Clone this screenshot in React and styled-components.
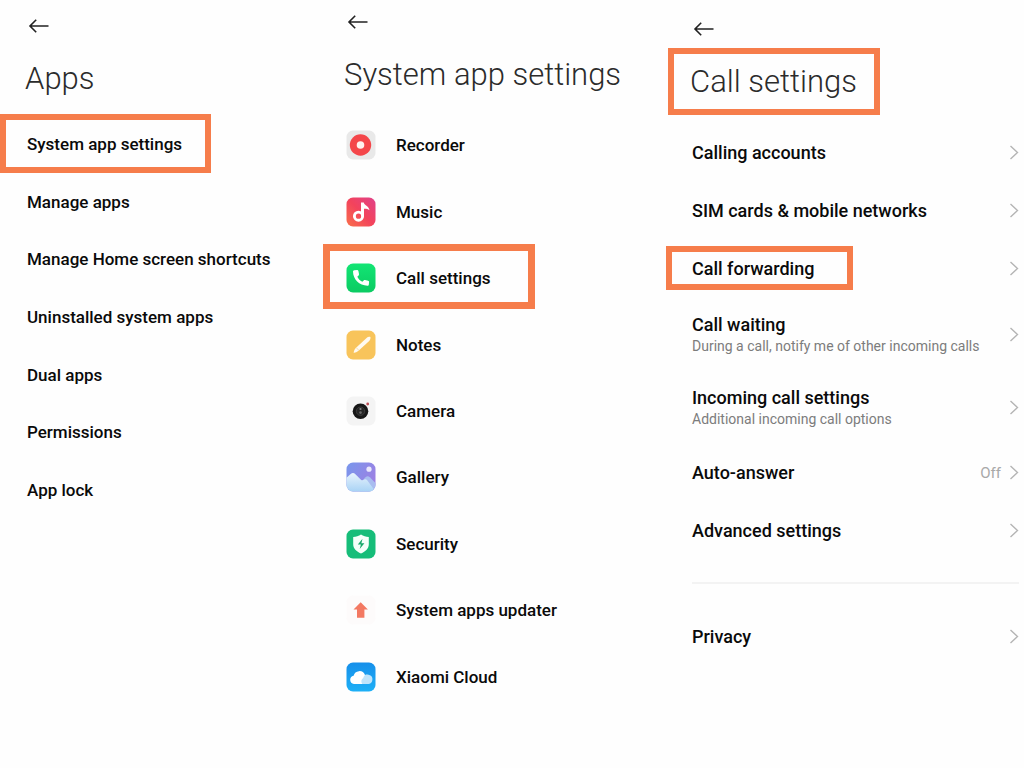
import React from "react";
import styled, { createGlobalStyle } from "styled-components";

const GlobalStyle = createGlobalStyle`
  *, *::before, *::after { box-sizing: border-box; }
  body {
    margin: 0;
    background: #fefefe;
    color: #0a0a0a;
    font-family: Roboto, "Liberation Sans", sans-serif;
  }
`;

const Page = styled.main`
  display: grid;
  grid-template-columns: 322fr 344fr 358fr;
  min-height: 100vh;
`;

const Screen = styled.section`
  display: flex;
  flex-direction: column;
  min-width: 0;
  padding: ${(p) => p.$top}px 5px 24px ${(p) => p.$left}px;
`;

const BackButton = styled.button`
  display: flex;
  align-self: flex-start;
  padding: 0;
  border: 0;
  background: none;
  color: #222;
  cursor: pointer;
`;

const Title = styled.h1`
  position: relative;
  margin: 24px 0 6px -2px;
  font-size: 31px;
  font-weight: 300;
  line-height: 44px;
  color: #2b2b2b;
  white-space: nowrap;
`;

const List = styled.ul`
  display: flex;
  flex-direction: column;
  margin: ${(p) => p.$gap || 0}px 0 0;
  padding: 0;
  list-style: none;
  min-height: ${(p) => (p.$height ? `${p.$height}px` : "auto")};
`;

const Item = styled.li`
  position: relative;
  display: flex;
  flex: 1 0 auto;
`;

const Row = styled.button`
  display: flex;
  flex: 1;
  align-items: center;
  gap: ${(p) => p.$gap || 8}px;
  min-width: 0;
  min-height: ${(p) => p.$height || 0}px;
  padding: 0;
  border: 0;
  background: none;
  color: inherit;
  font: inherit;
  text-align: left;
  cursor: pointer;
`;

const Texts = styled.span`
  display: flex;
  flex: 1;
  flex-direction: column;
  min-width: 0;
`;

const Label = styled.span`
  font-size: ${(p) => (p.$large ? 18 : 17)}px;
  font-weight: 500;
  line-height: 22px;
  white-space: nowrap;
`;

const Note = styled.span`
  font-size: 14px;
  line-height: 20px;
  color: #7c7c7c;
  white-space: nowrap;
`;

const Value = styled.span`
  font-size: 15px;
  line-height: 20px;
  color: #a8a8a8;
`;

const Divider = styled.hr`
  width: 100%;
  height: 2px;
  margin: 22px 0 24px;
  border: 0;
  background: #f3f3f3;
`;

const Highlight = styled.span`
  position: absolute;
  top: ${(p) => p.$top}px;
  left: ${(p) => p.$left}px;
  width: ${(p) => p.$width}px;
  height: ${(p) => p.$height}px;
  border: ${(p) => p.$line || 6}px solid #f67d4b;
  pointer-events: none;
`;

const Icon = styled.svg`
  display: block;
  flex: none;
`;

function Back() {
  return (
    <BackButton aria-label="Back">
      <Icon width="22" height="14" viewBox="0 0 22 14" fill="none" stroke="currentColor" strokeWidth="1.6">
        <path d="M21.500 7H3.200M9.200 .8 3 7l6.200 6.200" />
      </Icon>
    </BackButton>
  );
}

function Chevron() {
  return (
    <Icon width="10" height="16" viewBox="0 0 10 16" fill="none" stroke="#b4b4b4" strokeWidth="1.4">
      <path d="M1.500 1 8.500 7.500l-7 6.500" />
    </Icon>
  );
}

function AppIcon({ children, fill }) {
  return (
    <Icon width="30" height="30" viewBox="0 0 30 30" aria-hidden="true">
      <rect x=".5" y=".5" width="29" height="29" rx="6.500" fill={fill} />
      {children}
    </Icon>
  );
}

const icons = {
  recorder: (
    <AppIcon fill="#e9e9e9">
      <circle cx="14.500" cy="15" r="10.700" fill="#f4464a" />
      <circle cx="14.500" cy="15" r="3.800" fill="#fff1ee" />
    </AppIcon>
  ),
  music: (
    <AppIcon fill="url(#music)">
      <defs>
        <linearGradient id="music" x1="1" y1="0" x2="0" y2="1">
          <stop offset="0" stopColor="#e0428a" />
          <stop offset=".5" stopColor="#f3435c" />
          <stop offset="1" stopColor="#f9704b" />
        </linearGradient>
      </defs>
      <circle cx="12.500" cy="19.200" r="4.100" fill="none" stroke="#fff" strokeWidth="2.900" />
      <path d="M15 5.500h2.800c.3 2.700 5 3.300 5.700 7.800-1.700-1.300-3.800-1.700-5.500-1.500V19.200h-3z" fill="#fff" />
    </AppIcon>
  ),
  call: (
    <AppIcon fill="url(#call)">
      <defs>
        <linearGradient id="call" x1="0" y1="0" x2="0" y2="1">
          <stop offset="0" stopColor="#12e574" />
          <stop offset="1" stopColor="#0bcb62" />
        </linearGradient>
      </defs>
      <path
        d="M8.200 7.300l2.800-.3c.8-.1 1.200.3 1.400 1l.6 3.100c.1.600 0 1-.4 1.400l-1.300 1.300c1.100 2.300 2.700 3.900 5 5l1.400-1.300c.4-.4.8-.5 1.400-.4l3 .6c.7.200 1.100.6 1 1.400l-.3 2.600c-.1.700-.6 1.100-1.300 1.100C13.200 22.500 7.200 16.600 7 8.600c0-.7.500-1.200 1.200-1.300z"
        fill="#fff"
      />
    </AppIcon>
  ),
  notes: (
    <AppIcon fill="#f8c45b">
      <path d="M20.300 8.200c1.300-1.200 2.700-1.600 4.100-1.200.3 1.500-.1 2.800-1.200 4L12.500 20.800c-1.500 1.200-3 1.900-4.800 2.100.1-1.900.8-3.500 2.100-4.800z" fill="#fffaf0" />
      <path d="M10.300 17.700l2.500 2.600" stroke="#f4d598" strokeWidth=".8" />
    </AppIcon>
  ),
  camera: (
    <AppIcon fill="#f4f4f4">
      <circle cx="14.500" cy="15.200" r="7.800" fill="#171717" />
      <circle cx="14.500" cy="15.200" r="4.200" fill="#252525" stroke="#3b3b3b" />
      <circle cx="14.500" cy="13" r="1.100" fill="#858585" />
      <circle cx="14.500" cy="16.600" r="1.300" fill="#686868" />
      <circle cx="21.700" cy="8" r="1.400" fill="#b94b54" />
    </AppIcon>
  ),
  gallery: (
    <AppIcon fill="url(#gallery)">
      <defs>
        <linearGradient id="gallery" x1="0" y1="0" x2="1" y2=".6">
          <stop offset="0" stopColor="#7897ec" />
          <stop offset="1" stopColor="#9d80e3" />
        </linearGradient>
        <linearGradient id="hill" x1="0" y1="0" x2="0" y2="1">
          <stop offset="0" stopColor="#e8f3fd" />
          <stop offset="1" stopColor="#a9d3f5" />
        </linearGradient>
      </defs>
      <path d="M14 21l5.500-5.700c1.500-1.500 3-1.200 4.300 0l5.700 5.700v2a6.500 6.500 0 0 1-6.500 6.500H14z" fill="#a9bdf0" />
      <path d="M.5 15.800l4.200-3.800c1.500-1.300 3.200-1.300 4.700.2l5.300 5.200c1.300 1.200 2.400 1 3.600.2 1.100-.7 2-.3 2.900.6l6.600 9.100c-1.200 1.400-2.800 2.200-4.800 2.200H7A6.500 6.500 0 0 1 .5 23z" fill="url(#hill)" />
      <circle cx="23" cy="7.200" r="2.600" fill="#e9e7fc" />
    </AppIcon>
  ),
  security: (
    <AppIcon fill="#16bd79">
      <path d="M15 5.500c2.300 1.600 4.900 2.400 7.800 2.500v7.300c0 4.500-3.200 7.100-7.800 9.200-4.600-2.100-7.800-4.700-7.800-9.200V8c2.900-.1 5.500-.9 7.800-2.500z" fill="#f4fff9" />
      <path d="M16.500 9.800l-4.700 5.700h3.100l-1.200 4.600 4.700-5.900h-3z" fill="#16a96a" />
    </AppIcon>
  ),
  updater: (
    <AppIcon fill="#fdfbfb">
      <path d="M14.700 7.200l7.200 7.200h-3.500v8.300H11v-8.300H7.500z" fill="#f37962" />
    </AppIcon>
  ),
  cloud: (
    <AppIcon fill="url(#cloud)">
      <defs>
        <linearGradient id="cloud" x1="0" y1="0" x2="0" y2="1">
          <stop offset="0" stopColor="#168fea" />
          <stop offset="1" stopColor="#1eb0f6" />
        </linearGradient>
      </defs>
      <path d="M8 22a4.200 4.200 0 0 1-.4-8.300 6 6 0 0 1 11.400-.8A4.700 4.700 0 1 1 21.500 22z" fill="#fff" />
      <path d="M17.200 16a4.700 4.700 0 1 1 4.300 6h-5.300a4.600 4.600 0 0 1 1-6z" fill="#bfe4fb" />
    </AppIcon>
  ),
};

const appItems = [
  { label: "System app settings", mark: { $top: -1, $left: -27, $width: 211, $height: 59 } },
  { label: "Manage apps" },
  { label: "Manage Home screen shortcuts" },
  { label: "Uninstalled system apps" },
  { label: "Dual apps" },
  { label: "Permissions" },
  { label: "App lock" },
];

const systemItems = [
  { label: "Recorder", icon: "recorder" },
  { label: "Music", icon: "music" },
  { label: "Call settings", icon: "call", mark: { $top: -1, $left: -23, $width: 212, $height: 65, $line: 7 } },
  { label: "Notes", icon: "notes" },
  { label: "Camera", icon: "camera" },
  { label: "Gallery", icon: "gallery" },
  { label: "Security", icon: "security" },
  { label: "System apps updater", icon: "updater" },
  { label: "Xiaomi Cloud", icon: "cloud" },
];

const callItems = [
  { label: "Calling accounts" },
  { label: "SIM cards & mobile networks" },
  { label: "Call forwarding", mark: { $top: 6, $left: -26, $width: 187, $height: 44 } },
  { label: "Call waiting", note: "During a call, notify me of other incoming calls" },
  { label: "Incoming call settings", note: "Additional incoming call options" },
  { label: "Auto-answer", value: "Off" },
  { label: "Advanced settings" },
];

function CallItem({ item }) {
  return (
    <Item>
      <Row $height={item.note ? 73 : 58}>
        <Texts>
          <Label $large>{item.label}</Label>
          {item.note && <Note>{item.note}</Note>}
        </Texts>
        {item.value && <Value>{item.value}</Value>}
        <Chevron />
      </Row>
      {item.mark && <Highlight {...item.mark} />}
    </Item>
  );
}

export default function App() {
  return (
    <>
      <GlobalStyle />
      <Page>
        <Screen $top={19} $left={27}>
          <Back />
          <Title>Apps</Title>
          <List $gap={8} $height={404}>
            {appItems.map((item) => (
              <Item key={item.label}>
                <Row>
                  <Label>{item.label}</Label>
                </Row>
                {item.mark && <Highlight {...item.mark} />}
              </Item>
            ))}
          </List>
        </Screen>

        <Screen $top={15} $left={24}>
          <Back />
          <Title>System app settings</Title>
          <List $gap={9} $height={598}>
            {systemItems.map((item) => (
              <Item key={item.label}>
                <Row $gap={20}>
                  {icons[item.icon]}
                  <Label>{item.label}</Label>
                </Row>
                {item.mark && <Highlight {...item.mark} />}
              </Item>
            ))}
          </List>
        </Screen>

        <Screen $top={22} $left={26}>
          <Back />
          <Title>
            Call settings
            <Highlight $top={-12} $left={-22} $width={212} $height={67} />
          </Title>
          <List $gap={14}>
            {callItems.map((item) => (
              <CallItem key={item.label} item={item} />
            ))}
          </List>
          <Divider />
          <List>
            <CallItem item={{ label: "Privacy" }} />
          </List>
        </Screen>
      </Page>
    </>
  );
}
